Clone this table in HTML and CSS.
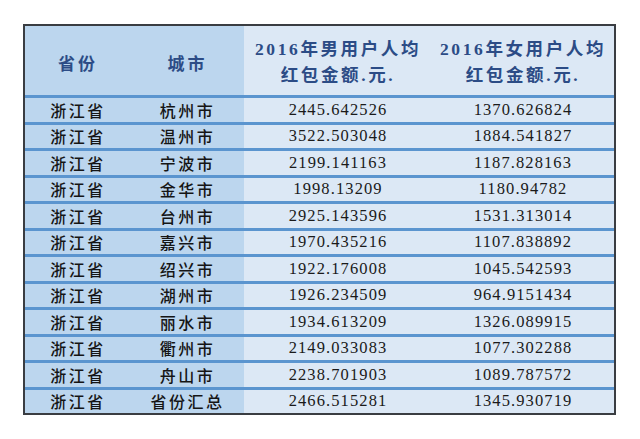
FILE: index.html
```html
<!DOCTYPE html>
<html lang="zh-CN">
<head>
<meta charset="utf-8">
<title>2016年浙江省用户人均红包金额</title>
<link rel="stylesheet" href="styles.css">
</head>
<body>
<div class="sheet">
  <div class="row head">
    <div class="cell dark hcn">省份</div>
    <div class="cell dark hcn">城市</div>
    <div class="cell light hnum"><span>2016年男用户人均</span><span>红包金额.元.</span></div>
    <div class="cell light hnum"><span>2016年女用户人均</span><span>红包金额.元.</span></div>
  </div>
  <div class="row"><div class="cell dark cn">浙江省</div><div class="cell dark cn">杭州市</div><div class="cell light num">2445.642526</div><div class="cell light num">1370.626824</div></div>
  <div class="row"><div class="cell dark cn">浙江省</div><div class="cell dark cn">温州市</div><div class="cell light num">3522.503048</div><div class="cell light num">1884.541827</div></div>
  <div class="row"><div class="cell dark cn">浙江省</div><div class="cell dark cn">宁波市</div><div class="cell light num">2199.141163</div><div class="cell light num">1187.828163</div></div>
  <div class="row"><div class="cell dark cn">浙江省</div><div class="cell dark cn">金华市</div><div class="cell light num">1998.13209</div><div class="cell light num">1180.94782</div></div>
  <div class="row"><div class="cell dark cn">浙江省</div><div class="cell dark cn">台州市</div><div class="cell light num">2925.143596</div><div class="cell light num">1531.313014</div></div>
  <div class="row"><div class="cell dark cn">浙江省</div><div class="cell dark cn">嘉兴市</div><div class="cell light num">1970.435216</div><div class="cell light num">1107.838892</div></div>
  <div class="row"><div class="cell dark cn">浙江省</div><div class="cell dark cn">绍兴市</div><div class="cell light num">1922.176008</div><div class="cell light num">1045.542593</div></div>
  <div class="row"><div class="cell dark cn">浙江省</div><div class="cell dark cn">湖州市</div><div class="cell light num">1926.234509</div><div class="cell light num">964.9151434</div></div>
  <div class="row"><div class="cell dark cn">浙江省</div><div class="cell dark cn">丽水市</div><div class="cell light num">1934.613209</div><div class="cell light num">1326.089915</div></div>
  <div class="row"><div class="cell dark cn">浙江省</div><div class="cell dark cn">衢州市</div><div class="cell light num">2149.033083</div><div class="cell light num">1077.302288</div></div>
  <div class="row"><div class="cell dark cn">浙江省</div><div class="cell dark cn">舟山市</div><div class="cell light num">2238.701903</div><div class="cell light num">1089.787572</div></div>
  <div class="row"><div class="cell dark cn">浙江省</div><div class="cell dark cn">省份汇总</div><div class="cell light num">2466.515281</div><div class="cell light num">1345.930719</div></div>
</div>
</body>
</html>
```

FILE: styles.css
```css
html, body {
  margin: 0;
  padding: 0;
  background: #ffffff;
}

body {
  padding: 24px 0 0 23px;
}

.sheet {
  width: 589px;
  border: 2px solid #3a3d42;
  display: flex;
  flex-direction: column;
}

.row {
  display: grid;
  grid-template-columns: 106px 113px 188px 182px;
  height: 23.5px;
  border-top: 3px solid #5b95cf;
}

.row.head {
  height: 69px;
  border-top: none;
}

.cell {
  display: flex;
  align-items: center;
  justify-content: center;
  white-space: nowrap;
  overflow: hidden;
}

.dark {
  background: #bcd6ee;
}

.light {
  background: #dce8f5;
}

.hcn {
  font-family: "Noto Sans CJK SC", sans-serif;
  font-weight: 700;
  font-size: 17px;
  letter-spacing: 3px;
  color: #2c4c86;
  padding-top: 4px;
}

.hnum {
  flex-direction: column;
  font-family: "Liberation Serif", "Noto Sans CJK SC", serif;
  font-weight: 700;
  font-size: 17.5px;
  line-height: 26px;
  letter-spacing: 2.6px;
  color: #2c4c86;
  padding-top: 2px;
}

.cn {
  font-family: "Noto Sans CJK SC", sans-serif;
  font-weight: 500;
  font-size: 16px;
  letter-spacing: 2.5px;
  color: #151515;
}

.num {
  font-family: "Liberation Serif", serif;
  font-size: 16.5px;
  letter-spacing: 1.1px;
  color: #1a1a1a;
}
```
